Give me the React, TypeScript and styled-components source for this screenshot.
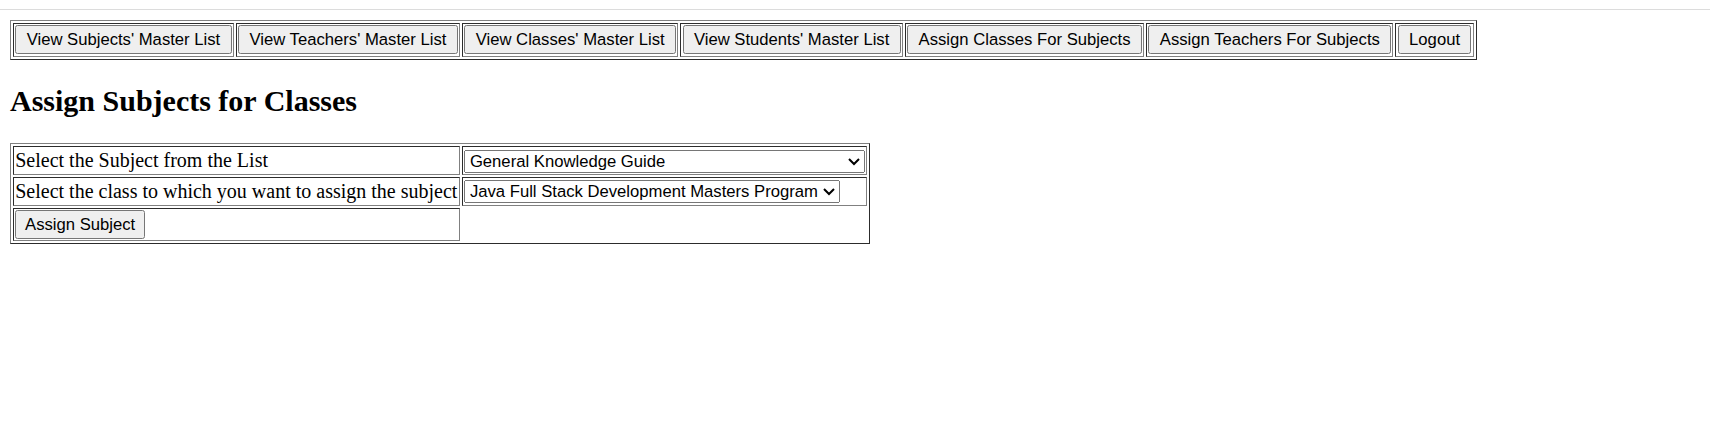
import React from "react";
import styled, { createGlobalStyle } from "styled-components";

const GlobalStyle = createGlobalStyle`
  html, body { margin: 0; padding: 0; background: #ffffff; }
  body {
    font-family: "Liberation Serif", "Times New Roman", serif;
    font-size: 16px;
    color: #000000;
  }
`;

const TopRule = styled.div`
  height: 1px;
  margin-top: 9px;
  background: #dcdcdc;
`;

const Page = styled.div`
  zoom: 1.25;
  padding: 8px 8px 0 8px;
`;

const BorderTable = styled.table`
  border: 1px outset gray;
  border-spacing: 2px;
  border-collapse: separate;
`;

const Cell = styled.td`
  border: 1px inset gray;
  padding: 1px;
  vertical-align: middle;
`;

const NavButton = styled.button<{ $compact?: boolean }>`
  font-family: "Liberation Sans", Arial, sans-serif;
  font-size: 13.3333px;
  color: #000000;
  padding: ${(p) => (p.$compact ? "2px 6.25px" : "2px 7.5px")};
  cursor: pointer;
`;

const Heading = styled.h2`
  font-family: "Liberation Serif", "Times New Roman", serif;
  font-size: 24px;
  font-weight: bold;
  margin: 19.92px 0;
`;

const Label = styled(Cell)`
  font-size: 16px;
  white-space: nowrap;
  padding: 1.5px 1px;
`;

const Picker = styled.select<{ $width?: string }>`
  font-family: "Liberation Sans", Arial, sans-serif;
  font-size: 13.3333px;
  color: #000000;
  ${(p) => (p.$width ? `width: ${p.$width};` : "")}
`;

const navItems = [
  "View Subjects' Master List",
  "View Teachers' Master List",
  "View Classes' Master List",
  "View Students' Master List",
  "Assign Classes For Subjects",
  "Assign Teachers For Subjects",
  "Logout",
];

export default function App() {
  return (
    <>
      <GlobalStyle />
      <TopRule />
      <Page>
        <BorderTable>
          <tbody>
            <tr>
              {navItems.map((n) => (
                <Cell key={n}>
                  <NavButton type="button">{n}</NavButton>
                </Cell>
              ))}
            </tr>
          </tbody>
        </BorderTable>
        <Heading>Assign Subjects for Classes</Heading>
        <BorderTable>
          <tbody>
            <tr>
              <Label>Select the Subject from the List</Label>
              <Cell>
                <Picker $width="321px" defaultValue="gk">
                  <option value="gk">General Knowledge Guide</option>
                </Picker>
              </Cell>
            </tr>
            <tr>
              <Label>Select the class to which you want to assign the subject</Label>
              <Cell>
                <Picker defaultValue="java">
                  <option value="java">Java Full Stack Development Masters Program</option>
                </Picker>
              </Cell>
            </tr>
            <tr>
              <Cell>
                <NavButton type="submit" $compact>
                  Assign Subject
                </NavButton>
              </Cell>
            </tr>
          </tbody>
        </BorderTable>
      </Page>
    </>
  );
}
